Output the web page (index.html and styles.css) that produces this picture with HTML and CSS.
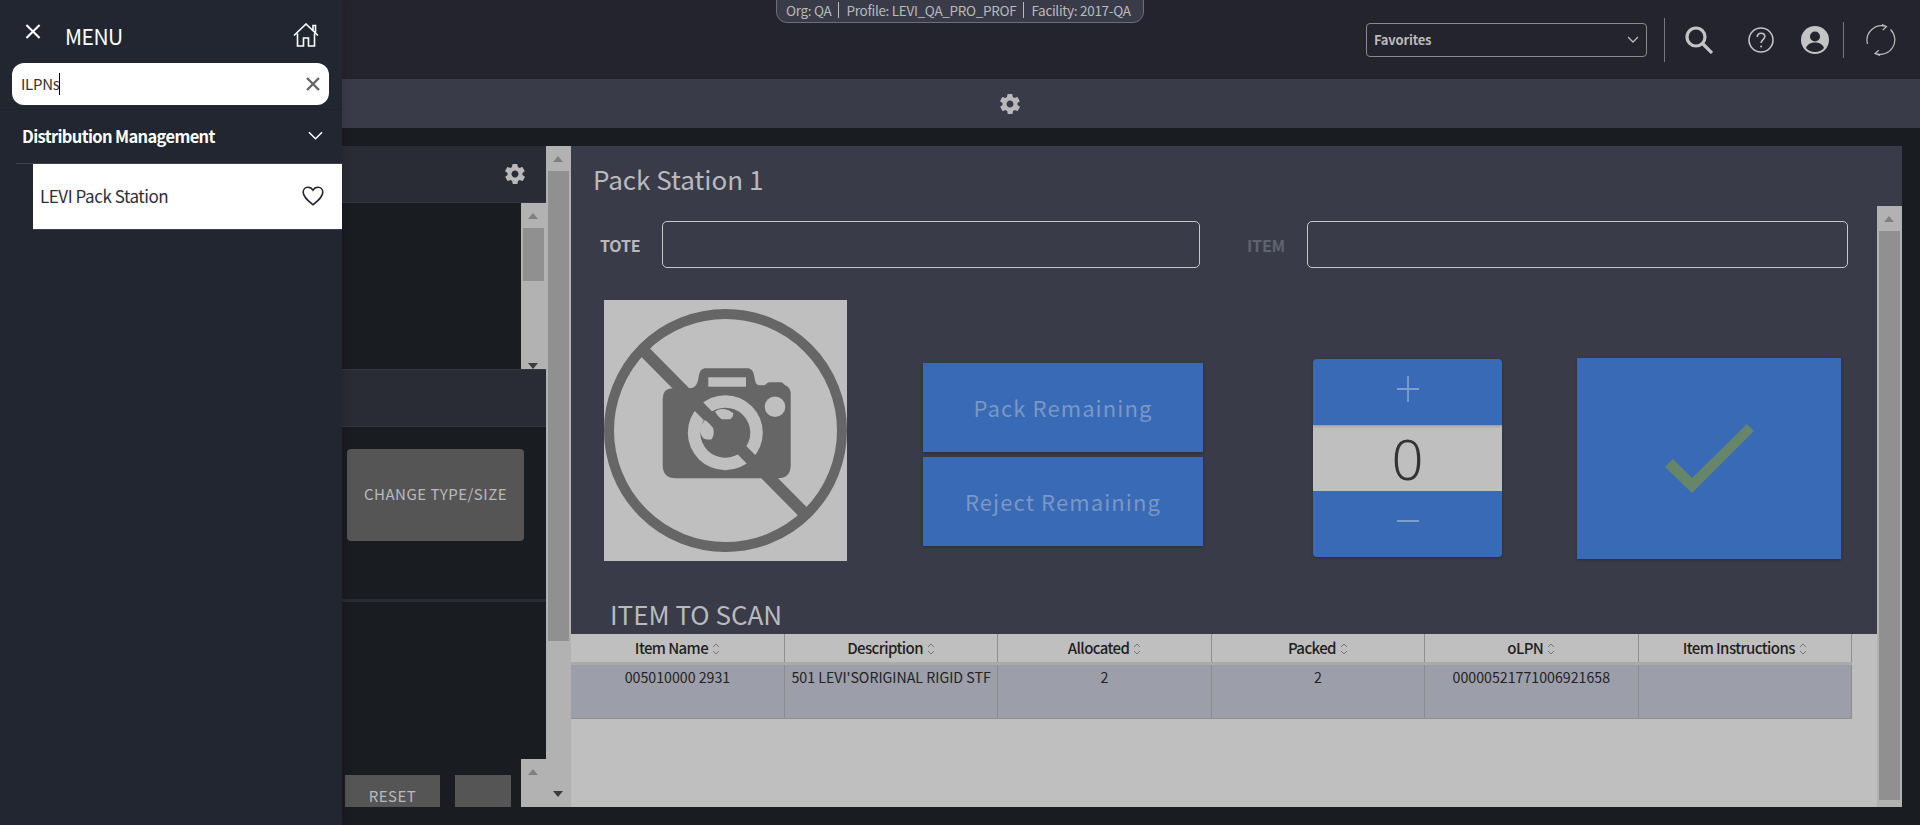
FILE: index.html
```html
<!DOCTYPE html>
<html lang="en">
<head>
  <meta charset="UTF-8" />
  <meta name="viewport" content="width=device-width, initial-scale=1.0"/>
  <title>LEVI Pack Station</title>
  <link rel="stylesheet" href="styles.css">
</head>
<body>

  <!-- SIDE MENU -->
  <aside class="side-menu">
    <div class="menu-head">
      <div class="menu-title-row">
        <svg class="menu-close" viewBox="0 0 16 16"><path d="M1 1 15 15M15 1 1 15"/></svg>
        <span class="menu-title">MENU</span>
        <svg class="menu-home" viewBox="0 0 26 24"><path d="M1 12.500 13 1l12 11.500M20 7.500V2.500h2.500V10M4.500 10.500V23h6v-8h5v8h6V10.500"/></svg>
      </div>
      <div class="menu-search">
        <span class="menu-search-text">ILPNs</span>
        <svg class="menu-search-clear" viewBox="0 0 14 14"><path d="M1 1 13 13M13 1 1 13"/></svg>
      </div>
    </div>
    <div class="menu-group">
      <span>Distribution Management</span>
      <svg class="menu-chevron" viewBox="0 0 16 9"><path d="M1 1l7 7 7-7"/></svg>
    </div>
    <div class="menu-item">
      <span>LEVI Pack Station</span>
      <svg class="menu-heart" viewBox="0 0 22 20"><path d="M11 18.700C6 14.500 1.200 11 1.200 6.200 1.200 3.200 3.500 1.200 6 1.200c2 0 3.900 1 5 3 1.100-2 3-3 5-3 2.500 0 4.800 2 4.800 5 0 4.800-4.800 8.300-9.800 12.500z"/></svg>
    </div>
  </aside>

  <!-- TOP BAR -->
  <header class="topbar">
    <div class="context-pill">
      <span>Org: QA</span>
      <span>Profile: LEVI_QA_PRO_PROF</span>
      <span>Facility: 2017-QA</span>
    </div>
    <div class="favorites">
      <span>Favorites</span>
      <svg class="favorites-chevron" viewBox="0 0 12 7"><path d="M1 1l5 5 5-5"/></svg>
    </div>
    <div class="top-icons">
      <svg class="icon-search" viewBox="0 0 28 28"><circle cx="11" cy="11" r="9"/><path d="M17.500 17.500 27 27"/></svg>
      <svg class="icon-help" viewBox="0 0 26 26"><circle cx="13" cy="13" r="12"/><path d="M9.300 10c0-2.400 1.700-3.800 3.800-3.800s3.700 1.400 3.700 3.400c0 3-3.700 3-3.700 6.400"/><circle class="dot" cx="13.100" cy="19.500" r="1"/></svg>
      <svg class="icon-user" viewBox="0 0 28 28"><circle cx="14" cy="14" r="14"/><circle class="cut" cx="14" cy="10.500" r="5"/><path class="cut" d="M5 22c1.500-4 5-5.500 9-5.500s7.500 1.500 9 5.500c-2 2.500-5.300 4-9 4s-7-1.500-9-4z"/></svg>
      <span class="top-sep"></span>
      <svg class="icon-refresh" viewBox="0 0 30 32"><path d="M1.500 20A14.500 14.500 0 0 1 20 2.500M16 .5l4.500 2.200-3.800 3.300M24.500 5.500A14.500 14.500 0 0 1 9.500 29.500M14 31.500l-5-2 3.800-3.300"/></svg>
    </div>
  </header>

  <div class="subbar">
    <svg class="gear" viewBox="0 0 24 24"><path d="M19.400 13c.1-.3.100-.7.100-1s0-.7-.1-1l2.100-1.600c.2-.2.200-.4.100-.6l-2-3.500c-.1-.2-.4-.3-.6-.2l-2.500 1c-.5-.4-1.100-.7-1.700-1l-.4-2.600c0-.3-.2-.5-.5-.5h-4c-.3 0-.5.200-.5.500l-.4 2.600c-.6.300-1.200.6-1.700 1l-2.500-1c-.2-.1-.5 0-.6.200l-2 3.500c-.1.200-.1.500.1.600L4.600 11c-.1.300-.1.700-.1 1s0 .7.100 1l-2.100 1.600c-.2.200-.2.400-.1.600l2 3.500c.1.200.4.300.6.200l2.500-1c.5.400 1.100.7 1.700 1l.4 2.600c0 .3.200.5.500.5h4c.3 0 .5-.2.500-.5l.4-2.600c.6-.3 1.200-.6 1.700-1l2.500 1c.2.100.5 0 .6-.2l2-3.500c.1-.2.100-.5-.1-.6zM12 15.500c-1.900 0-3.500-1.600-3.500-3.500s1.600-3.500 3.500-3.500 3.500 1.600 3.500 3.500-1.600 3.500-3.500 3.500z"/></svg>
  </div>

  <div class="workspace">

    <!-- LEFT PANE -->
    <section class="left-pane">
      <div class="pane-head">
        <svg class="gear" viewBox="0 0 24 24"><path d="M19.400 13c.1-.3.100-.7.100-1s0-.7-.1-1l2.100-1.600c.2-.2.200-.4.100-.6l-2-3.500c-.1-.2-.4-.3-.6-.2l-2.500 1c-.5-.4-1.100-.7-1.700-1l-.4-2.600c0-.3-.2-.5-.5-.5h-4c-.3 0-.5.200-.5.500l-.4 2.600c-.6.300-1.200.6-1.700 1l-2.500-1c-.2-.1-.5 0-.6.200l-2 3.500c-.1.200-.1.500.1.600L4.600 11c-.1.300-.1.700-.1 1s0 .7.100 1l-2.100 1.600c-.2.200-.2.400-.1.600l2 3.500c.1.200.4.300.6.200l2.500-1c.5.400 1.100.7 1.700 1l.4 2.600c0 .3.200.5.500.5h4c.3 0 .5-.2.500-.5l.4-2.600c.6-.3 1.200-.6 1.700-1l2.500 1c.2.100.5 0 .6-.2l2-3.500c.1-.2.100-.5-.1-.6zM12 15.500c-1.900 0-3.500-1.600-3.500-3.500s1.600-3.500 3.500-3.500 3.500 1.600 3.500 3.500-1.600 3.500-3.500 3.500z"/></svg>
      </div>
      <div class="pane-list">
        <div class="scrollbar small">
          <span class="arrow-up"></span>
          <span class="thumb"></span>
          <span class="arrow-down"></span>
        </div>
      </div>
      <div class="pane-head empty"></div>
      <div class="pane-actions">
        <button class="dim-button">CHANGE TYPE/SIZE</button>
      </div>
      <div class="pane-footer">
        <div class="footer-buttons">
          <button class="dim-button reset">RESET</button>
          <button class="dim-button blank"></button>
        </div>
        <div class="scrollbar stub"><span class="arrow-up"></span></div>
      </div>
    </section>

    <div class="scrollbar tall">
      <span class="arrow-up"></span>
      <span class="thumb"></span>
      <span class="arrow-down"></span>
    </div>

    <!-- PACK STATION -->
    <main class="station">
      <div class="station-scroll">
        <div class="station-body">
          <h1>Pack Station 1</h1>
          <div class="scan-row">
            <label class="scan-label">TOTE</label>
            <div class="scan-input tote"></div>
            <label class="scan-label off">ITEM</label>
            <div class="scan-input item"></div>
          </div>
          <div class="action-row">
            <div class="no-image">
              <svg viewBox="0 0 243 243">
                <circle class="ring" cx="121.500" cy="121.500" r="116.500"/>
                <path class="body" d="M58.700 90q0-10.700 10-10.700H86c5 0 7-4 8-8l1-5c1-5 3-7 7-7h41c4 0 6 2 7 7l1 5c.5 3 2 5 5 5h4c2 0 3-3 5-3h11c3 0 4 2 5 3 3 1 5.700 4 5.700 8v72q0 13-13 13H72q-13.300 0-13.300-13z"/>
                <rect class="light" x="104.300" y="68.300" width="37.700" height="9.400"/>
                <circle class="light" cx="171" cy="97.700" r="10.300"/>
                <circle class="light" cx="121.300" cy="123.700" r="37.500"/>
                <circle class="body" cx="121.300" cy="123.700" r="25"/>
                <path class="slash" d="M37 39 205 209"/>
                <path class="light" d="M101 111c3 2 6 5 8.300 8.300 1 4 .4 8-1.600 11-3 .6-6 .3-8.400-1-2.300-3-3.800-6-3.300-10 .8-3 3-6 5-8.300zM111 102.700c2-1.700 4.500-2.700 7-2.700 4 0 8 1.500 11.300 4.300.2 2.200-1.300 5-3.300 6h-8.300c-2.500-2-4.700-4.500-6.700-7.600z"/>
              </svg>
            </div>
            <div class="remaining">
              <button class="blue-button">Pack Remaining</button>
              <button class="blue-button">Reject Remaining</button>
            </div>
            <div class="stepper">
              <div class="step"><svg viewBox="0 0 22 26"><path d="M0 13h22M11 0v26"/></svg></div>
              <div class="step-value">0</div>
              <div class="step"><svg viewBox="0 0 22 4"><path d="M0 2h22"/></svg></div>
            </div>
            <button class="confirm">
              <svg viewBox="0 0 89 69"><path d="M8 35 0 43l27 26 62-62-7-7-55 54z"/></svg>
            </button>
          </div>
          <h2>ITEM TO SCAN</h2>
        </div>
        <div class="scrollbar wide">
          <span class="arrow-up"></span>
          <span class="thumb"></span>
        </div>
      </div>

      <div class="table-wrap">
        <table>
          <thead>
            <tr>
              <th>Item Name<svg class="sort" viewBox="0 0 8 14"><path d="M1 5l3-3 3 3M1 9l3 3 3-3"/></svg></th>
              <th>Description<svg class="sort" viewBox="0 0 8 14"><path d="M1 5l3-3 3 3M1 9l3 3 3-3"/></svg></th>
              <th>Allocated<svg class="sort" viewBox="0 0 8 14"><path d="M1 5l3-3 3 3M1 9l3 3 3-3"/></svg></th>
              <th>Packed<svg class="sort" viewBox="0 0 8 14"><path d="M1 5l3-3 3 3M1 9l3 3 3-3"/></svg></th>
              <th>oLPN<svg class="sort" viewBox="0 0 8 14"><path d="M1 5l3-3 3 3M1 9l3 3 3-3"/></svg></th>
              <th>Item Instructions<svg class="sort" viewBox="0 0 8 14"><path d="M1 5l3-3 3 3M1 9l3 3 3-3"/></svg></th>
            </tr>
          </thead>
          <tbody>
            <tr>
              <td>005010000 2931</td>
              <td>501 LEVI'SORIGINAL RIGID STF</td>
              <td>2</td>
              <td>2</td>
              <td>00000521771006921658</td>
              <td></td>
            </tr>
          </tbody>
        </table>
      </div>
    </main>
  </div>

</body>
</html>
```

FILE: styles.css
```css
:root {
  --bar: #23242e;
  --panel: #393c48;
  --pane-head: #292c35;
  --dark: #191c21;
  --menu: #212630;
  --light: #bfbfbf;
  --blue: #386ab5;
  --track: #b2b2b2;
  --thumb: #909090;
  --text-dim: #b9babd;
  --cjk: "Noto Sans CJK SC", "Noto Sans", sans-serif;
}

* {
  box-sizing: border-box;
}

html, body {
  height: 100%;
}

body {
  margin: 0;
  display: flex;
  flex-direction: column;
  overflow: hidden;
  background: var(--dark);
  font-family: var(--cjk);
  color: var(--text-dim);
}

svg {
  display: block;
  fill: none;
}

button {
  font-family: inherit;
  border: none;
  padding: 0;
}

/* side menu */
.side-menu {
  position: absolute;
  left: 0;
  top: 0;
  bottom: 0;
  width: 342px;
  z-index: 5;
  background: var(--menu);
  box-shadow: 2px 0 8px rgba(0, 0, 0, 0.15);
}

.menu-head {
  height: 110px;
  padding: 23px 13px 0 12px;
  border-bottom: 1px solid #1e222b;
}

.menu-title-row {
  position: relative;
  height: 40px;
  color: #fff;
}

.menu-close {
  position: absolute;
  left: 13px;
  top: 1px;
  width: 16px;
  height: 15px;
  stroke: #fff;
  stroke-width: 2.200;
}

.menu-title {
  position: absolute;
  left: 53px;
  top: 1px;
  font-size: 21px;
  line-height: 24px;
  letter-spacing: -0.5px;
}

.menu-home {
  position: absolute;
  left: 281px;
  top: 0;
  width: 26px;
  height: 24px;
  stroke: #fff;
  stroke-width: 1.600;
}

.menu-search {
  height: 42px;
  display: flex;
  align-items: center;
  justify-content: space-between;
  padding: 0 9px;
  border-radius: 12px;
  background: #fff;
}

.menu-search-text {
  font-size: 15px;
  line-height: 22px;
  letter-spacing: -0.3px;
  color: #333;
  border-right: 1px solid #000;
}

.menu-search-clear {
  width: 14px;
  height: 14px;
  stroke: #666;
  stroke-width: 2.400;
}

.menu-group {
  height: 54px;
  margin-left: 16px;
  padding: 0 19px 2px 6px;
  display: flex;
  align-items: center;
  justify-content: space-between;
  font-size: 16.500px;
  letter-spacing: -0.65px;
  font-weight: 700;
  color: #fff;
  border-bottom: 1px solid #3e424e;
}

.menu-chevron {
  width: 15px;
  height: 9px;
  stroke: #fff;
  stroke-width: 1.600;
}

.menu-item {
  height: 66px;
  margin-left: 33px;
  padding: 0 18px 2px 7px;
  display: flex;
  align-items: center;
  justify-content: space-between;
  background: #fff;
  font-size: 17px;
  letter-spacing: -0.45px;
  color: #2c2f38;
  border-bottom: 1px solid #3e424e;
}

.menu-heart {
  width: 22px;
  height: 20px;
  stroke: #23262e;
  stroke-width: 1.600;
}

/* top bar */
.topbar {
  position: relative;
  flex: none;
  height: 79px;
  background: var(--bar);
  display: flex;
  justify-content: flex-end;
  align-items: center;
  padding: 0 24px 0 0;
}

.context-pill {
  position: absolute;
  left: 776px;
  top: -10px;
  width: 368px;
  height: 33px;
  padding: 9px 0 0 9px;
  display: flex;
  background: var(--panel);
  border: 1px solid #6b6f7c;
  border-radius: 11px;
  font-size: 13.500px;
  letter-spacing: -0.3px;
  line-height: 20px;
  white-space: nowrap;
}

.context-pill span + span {
  border-left: 1px solid #b9babd;
  margin-left: 7px;
  padding-left: 7px;
  height: 16px;
  line-height: 16px;
  margin-top: 2px;
}

.favorites {
  width: 281px;
  height: 34px;
  padding: 0 7px;
  display: flex;
  align-items: center;
  justify-content: space-between;
  border: 1px solid #8a8b90;
  border-radius: 4px;
  font-size: 13px;
  letter-spacing: -0.2px;
  font-weight: 700;
}

.favorites-chevron {
  width: 12px;
  height: 7px;
  stroke: #b9babd;
  stroke-width: 1.300;
}

.top-icons {
  display: flex;
  align-items: center;
  height: 44px;
  margin-left: 17px;
  padding-left: 20px;
  border-left: 1px solid #777980;
}

.icon-search {
  width: 28px;
  height: 28px;
  stroke: #c4c4c4;
  stroke-width: 3.200;
}

.icon-help {
  width: 26px;
  height: 26px;
  margin-left: 35px;
  stroke: #c4c4c4;
  stroke-width: 1.600;
}

.icon-help .dot {
  fill: #c4c4c4;
  stroke: none;
}

.icon-user {
  width: 28px;
  height: 28px;
  margin-left: 27px;
  fill: #c4c4c4;
}

.icon-user .cut {
  fill: var(--bar);
}

.top-sep {
  width: 1px;
  height: 36px;
  margin-left: 14px;
  background: #777980;
}

.icon-refresh {
  width: 30px;
  height: 32px;
  margin-left: 22px;
  stroke: #bdbdbd;
  stroke-width: 1.200;
}

.subbar {
  flex: none;
  height: 49px;
  padding-left: 100px;
  background: var(--panel);
  display: flex;
  justify-content: center;
  align-items: center;
}

.gear {
  width: 24px;
  height: 24px;
  fill: #b9b9b9;
}

/* workspace */
.workspace {
  flex: 1;
  min-height: 0;
  display: flex;
  padding: 18px 18px 18px 0;
}

.left-pane {
  flex: none;
  width: 546px;
  display: flex;
  flex-direction: column;
  overflow: hidden;
  background: var(--dark);
}

.pane-head {
  flex: none;
  height: 57px;
  padding-right: 19px;
  display: flex;
  align-items: center;
  justify-content: flex-end;
  background: var(--pane-head);
  border-bottom: 1px solid #33363f;
}

.pane-head.empty {
  height: 58px;
  border-top: 1px solid #33363f;
}

.pane-list {
  flex: none;
  height: 166px;
  display: flex;
  justify-content: flex-end;
}

.pane-actions {
  flex: none;
  height: 175px;
  padding: 22px 0 0 347px;
  border-bottom: 3px solid #282b34;
}

.dim-button {
  background: #555;
  color: var(--text-dim);
  letter-spacing: 0.5px;
  border-radius: 4px;
  font-size: 15px;
}

.pane-actions .dim-button {
  width: 177px;
  height: 92px;
  padding-bottom: 4px;
}

.pane-footer {
  flex: 1;
  display: flex;
  justify-content: flex-end;
  align-items: flex-end;
}

.footer-buttons {
  display: flex;
  gap: 15px;
  margin-right: 10px;
}

.dim-button.reset,
.dim-button.blank {
  height: 32px;
  padding-top: 9px;
  border-radius: 0;
  line-height: 24px;
}

.dim-button.reset {
  width: 95px;
}

.dim-button.blank {
  width: 56px;
}

/* scrollbars */
.scrollbar {
  flex: none;
  position: relative;
  width: 25px;
  background: var(--track);
}

.scrollbar .thumb {
  position: absolute;
  left: 2px;
  right: 2px;
  background: var(--thumb);
}

.arrow-up,
.arrow-down {
  position: absolute;
  left: 7px;
  width: 0;
  height: 0;
  border-left: 5.500px solid transparent;
  border-right: 5.500px solid transparent;
}

.arrow-up {
  top: 10px;
  border-bottom: 6px solid #808080;
}

.arrow-down {
  border-top: 6px solid #3c3c3c;
}

.scrollbar.small {
  height: 166px;
}

.scrollbar.small .thumb {
  top: 25px;
  height: 53px;
}

.scrollbar.small .arrow-down {
  bottom: 0;
}

.scrollbar.stub {
  height: 48px;
}

.scrollbar.tall .thumb {
  top: 25px;
  height: 470px;
}

.scrollbar.tall .arrow-down {
  top: 645px;
}

/* pack station */
.station {
  flex: 1;
  min-width: 0;
  position: relative;
  background: var(--panel);
  display: flex;
  flex-direction: column;
}

.station-scroll {
  flex: none;
  height: 488px;
  display: flex;
}

.station-body {
  flex: 1;
  min-width: 0;
  padding: 0 0 0 23px;
}

.scrollbar.wide {
  position: absolute;
  right: 0;
  top: 60px;
  bottom: 0;
  z-index: 1;
}

.scrollbar.wide .thumb {
  top: 25px;
  bottom: 7px;
}

h1 {
  margin: 0 0 0 -1px;
  padding-top: 13px;
  height: 75px;
  font-size: 26px;
  line-height: 40px;
  font-weight: 400;
}

.scan-row {
  height: 79px;
  display: flex;
  align-items: flex-start;
}

.scan-label {
  width: 68px;
  padding: 12px 0 0 6px;
  font-size: 16px;
  letter-spacing: -0.2px;
  line-height: 24px;
  font-weight: 700;
}

.scan-label.off {
  width: 67px;
  margin-left: 40px;
  padding-left: 7px;
  color: #60636f;
}

.scan-input {
  height: 47px;
  border: 1px solid #c8c8c8;
  border-radius: 5px;
}

.scan-input.tote {
  width: 538px;
}

.scan-input.item {
  width: 541px;
}

.action-row {
  height: 296px;
  display: flex;
  align-items: flex-start;
  margin-left: 10px;
}

.no-image {
  flex: none;
  width: 243px;
  height: 261px;
  padding-top: 9px;
  background: var(--light);
}

.no-image svg {
  width: 243px;
  height: 243px;
}

.ring {
  stroke: #666;
  stroke-width: 10;
}

.body {
  fill: #666;
}

.light {
  fill: var(--light);
}

.slash {
  stroke: #666;
  stroke-width: 12;
}

.remaining {
  flex: none;
  width: 280px;
  margin: 63px 0 0 76px;
  display: flex;
  flex-direction: column;
  gap: 5px;
}

.blue-button {
  height: 89px;
  padding-bottom: 2px;
  background: var(--blue);
  color: #7a97c6;
  font-size: 22px;
  letter-spacing: 1.100px;
  box-shadow: 0 1px 3px rgba(0, 0, 0, 0.25);
}

.stepper {
  flex: none;
  width: 189px;
  height: 198px;
  margin: 59px 0 0 110px;
  display: flex;
  flex-direction: column;
  border-radius: 4px;
  overflow: hidden;
  box-shadow: 0 1px 3px rgba(0, 0, 0, 0.25);
}

.step {
  flex: 1;
  padding-bottom: 6px;
  display: flex;
  align-items: center;
  justify-content: center;
  background: var(--blue);
}

.step:first-child {
  position: relative;
  box-shadow: 0 1px 3px rgba(0, 0, 0, 0.25);
}

.step svg {
  width: 22px;
  stroke: #7f9dcb;
  stroke-width: 1.800;
}

.step-value {
  flex: none;
  height: 66px;
  text-align: center;
  background: var(--light);
  color: #333;
  font-family: "Noto Sans", sans-serif;
  font-size: 56px;
  line-height: 66px;
  font-weight: 300;
}

.confirm {
  flex: none;
  width: 264px;
  height: 201px;
  margin: 58px 0 0 75px;
  display: flex;
  align-items: center;
  justify-content: center;
  background: var(--blue);
  box-shadow: 0 1px 3px rgba(0, 0, 0, 0.25);
}

.confirm svg {
  width: 89px;
  height: 69px;
  fill: #66866a;
}

h2 {
  margin: 0;
  padding-left: 16px;
  font-size: 26px;
  line-height: 36px;
  font-weight: 400;
}

/* table */
.table-wrap {
  flex: 1;
  min-height: 0;
  margin-right: 25px;
  background: var(--light);
}

table {
  width: 1281px;
  table-layout: fixed;
  border-collapse: collapse;
}

th {
  height: 29px;
  padding: 0;
  font-size: 15px;
  letter-spacing: -0.6px;
  line-height: 20px;
  font-weight: 500;
  color: #1f1f1f;
  background: var(--light);
  border-right: 1px solid #8f8f8f;
  border-bottom: 3px solid #aaa;
  white-space: nowrap;
}

td {
  height: 55px;
  padding: 3px 0 0;
  vertical-align: top;
  text-align: center;
  font-size: 14.200px;
  line-height: 18px;
  color: #222;
  background: #9c9ea9;
  border-right: 1px solid #8b8c91;
  border-bottom: 1px solid #8f8f8f;
  white-space: nowrap;
}

.sort {
  display: inline-block;
  width: 8px;
  height: 14px;
  margin-left: 4px;
  vertical-align: -2px;
  stroke: #777;
  stroke-width: 1;
}
```
